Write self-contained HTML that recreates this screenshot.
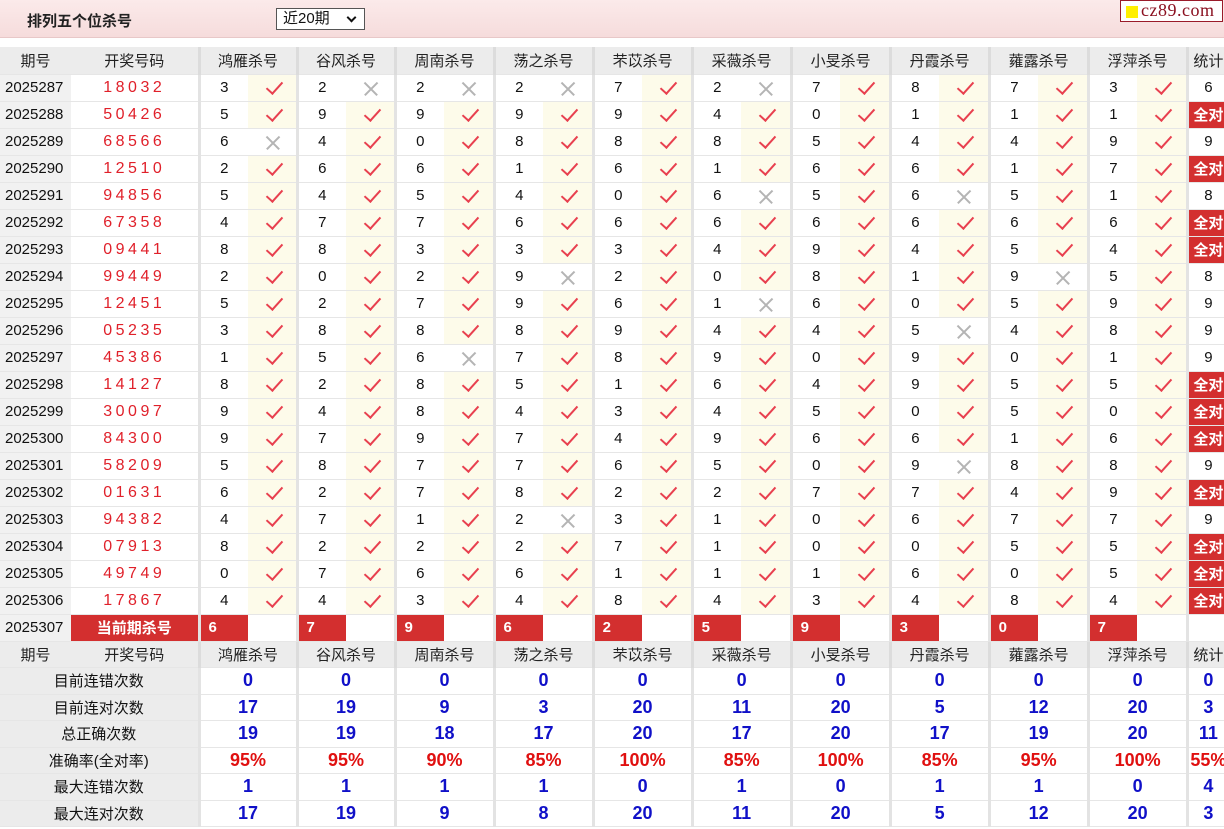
<!DOCTYPE html>
<html><head><meta charset="utf-8">
<style>
*{box-sizing:border-box;margin:0;padding:0}
body{width:1224px;height:829px;background:#fff;font-family:"Liberation Sans","Noto Sans CJK SC",sans-serif;overflow:hidden;position:relative}
.top{position:absolute;left:0;top:0;width:1224px;height:38px;background:linear-gradient(#fbeaea,#f6dcdc);border-bottom:1px solid #e8c8c8}
.title{position:absolute;left:27px;top:10px;font-size:15px;font-weight:bold;color:#222}
.sel{position:absolute;left:276px;top:8px;width:89px;height:22px;border:1px solid #555;background:#fff;font-size:15px;padding-left:6px;line-height:20px;color:#111}
.sel:after{content:"";position:absolute;right:9px;top:5px;width:5px;height:5px;border-right:2px solid #111;border-bottom:2px solid #111;transform:rotate(45deg)}
.logo{position:absolute;left:1120px;top:0;width:103px;height:22px;border:1px solid #9a1b2a;background:#fff;font-family:"Liberation Serif",serif;font-size:18px;color:#8b1020;line-height:19px;padding-left:20px;letter-spacing:.5px}
.logo:before{content:"";position:absolute;left:5px;top:5px;width:12px;height:12px;background:#ffef00}
table{position:absolute;left:0;top:47px;border-collapse:collapse;table-layout:fixed;width:1224px}
td{height:27px;border-bottom:1px solid #e6e6e6;text-align:center;font-size:15px;color:#111;white-space:nowrap;overflow:hidden;padding:0}
tr.s td{height:26.5px}
.h td{background:#ececec;font-size:15px;color:#222}
.p{background:#f1f1f1;text-align:left;padding-left:5px}
.d{color:#e0202a;letter-spacing:3.5px;font-size:16px;border-right:3px solid #e3e3e3}
.n{border-left:3px solid #e3e3e3;background:#fff}
.h .g{border-left:3px solid #dcdcdc}
.c{background:#fdfbea;position:relative}
.c:after{content:"";position:absolute;left:22px;top:3px;width:7px;height:14px;border-right:2px solid #e8404f;border-bottom:2px solid #e8404f;transform:rotate(42deg)}
.x{background:#fff;position:relative}
.x:before,.x:after{content:"";position:absolute;left:16px;top:13px;width:18px;height:1.5px;background:#b4b4b4;transform:rotate(45deg)}
.x:after{transform:rotate(-45deg)}
.t{border-left:3px solid #e3e3e3}
.a{background:#d32f2f;color:#fff;font-weight:bold}
.cur .d{background:#d32f2f;color:#fff;font-weight:bold;letter-spacing:0;font-size:15px}
.cur .n{background:#d32f2f;color:#fff;font-weight:bold;text-align:left;padding-left:8px}
.cur .e{background:#fff}
.l{background:#ececec;border-right:3px solid #e3e3e3}
.v{border-left:3px solid #e3e3e3;color:#1010c8;font-weight:bold;font-size:18px}
.r{color:#e01010}
</style></head><body>
<div class="top"><div class="title">排列五个位杀号</div><div class="sel">近20期</div><div class="logo">cz89.com</div></div>
<table>
<colgroup><col style="width:71px"><col style="width:128px"><col style="width:49px"><col style="width:49px"><col style="width:49px"><col style="width:49px"><col style="width:49px"><col style="width:50px"><col style="width:49px"><col style="width:50px"><col style="width:49px"><col style="width:50px"><col style="width:49px"><col style="width:50px"><col style="width:49px"><col style="width:50px"><col style="width:49px"><col style="width:50px"><col style="width:49px"><col style="width:50px"><col style="width:49px"><col style="width:50px"><col style="width:41px"></colgroup>
<tr class="h"><td class="p" style="text-align:center;padding:0">期号</td><td>开奖号码</td><td colspan="2" class="g">鸿雁杀号</td><td colspan="2" class="g">谷风杀号</td><td colspan="2" class="g">周南杀号</td><td colspan="2" class="g">荡之杀号</td><td colspan="2" class="g">芣苡杀号</td><td colspan="2" class="g">采薇杀号</td><td colspan="2" class="g">小旻杀号</td><td colspan="2" class="g">丹霞杀号</td><td colspan="2" class="g">蕹露杀号</td><td colspan="2" class="g">浮萍杀号</td><td class="g">统计</td></tr>
<tr><td class="p">2025287</td><td class="d">18032</td><td class="n">3</td><td class="c"></td><td class="n">2</td><td class="x"></td><td class="n">2</td><td class="x"></td><td class="n">2</td><td class="x"></td><td class="n">7</td><td class="c"></td><td class="n">2</td><td class="x"></td><td class="n">7</td><td class="c"></td><td class="n">8</td><td class="c"></td><td class="n">7</td><td class="c"></td><td class="n">3</td><td class="c"></td><td class="t">6</td></tr>
<tr><td class="p">2025288</td><td class="d">50426</td><td class="n">5</td><td class="c"></td><td class="n">9</td><td class="c"></td><td class="n">9</td><td class="c"></td><td class="n">9</td><td class="c"></td><td class="n">9</td><td class="c"></td><td class="n">4</td><td class="c"></td><td class="n">0</td><td class="c"></td><td class="n">1</td><td class="c"></td><td class="n">1</td><td class="c"></td><td class="n">1</td><td class="c"></td><td class="t a">全对</td></tr>
<tr><td class="p">2025289</td><td class="d">68566</td><td class="n">6</td><td class="x"></td><td class="n">4</td><td class="c"></td><td class="n">0</td><td class="c"></td><td class="n">8</td><td class="c"></td><td class="n">8</td><td class="c"></td><td class="n">8</td><td class="c"></td><td class="n">5</td><td class="c"></td><td class="n">4</td><td class="c"></td><td class="n">4</td><td class="c"></td><td class="n">9</td><td class="c"></td><td class="t">9</td></tr>
<tr><td class="p">2025290</td><td class="d">12510</td><td class="n">2</td><td class="c"></td><td class="n">6</td><td class="c"></td><td class="n">6</td><td class="c"></td><td class="n">1</td><td class="c"></td><td class="n">6</td><td class="c"></td><td class="n">1</td><td class="c"></td><td class="n">6</td><td class="c"></td><td class="n">6</td><td class="c"></td><td class="n">1</td><td class="c"></td><td class="n">7</td><td class="c"></td><td class="t a">全对</td></tr>
<tr><td class="p">2025291</td><td class="d">94856</td><td class="n">5</td><td class="c"></td><td class="n">4</td><td class="c"></td><td class="n">5</td><td class="c"></td><td class="n">4</td><td class="c"></td><td class="n">0</td><td class="c"></td><td class="n">6</td><td class="x"></td><td class="n">5</td><td class="c"></td><td class="n">6</td><td class="x"></td><td class="n">5</td><td class="c"></td><td class="n">1</td><td class="c"></td><td class="t">8</td></tr>
<tr><td class="p">2025292</td><td class="d">67358</td><td class="n">4</td><td class="c"></td><td class="n">7</td><td class="c"></td><td class="n">7</td><td class="c"></td><td class="n">6</td><td class="c"></td><td class="n">6</td><td class="c"></td><td class="n">6</td><td class="c"></td><td class="n">6</td><td class="c"></td><td class="n">6</td><td class="c"></td><td class="n">6</td><td class="c"></td><td class="n">6</td><td class="c"></td><td class="t a">全对</td></tr>
<tr><td class="p">2025293</td><td class="d">09441</td><td class="n">8</td><td class="c"></td><td class="n">8</td><td class="c"></td><td class="n">3</td><td class="c"></td><td class="n">3</td><td class="c"></td><td class="n">3</td><td class="c"></td><td class="n">4</td><td class="c"></td><td class="n">9</td><td class="c"></td><td class="n">4</td><td class="c"></td><td class="n">5</td><td class="c"></td><td class="n">4</td><td class="c"></td><td class="t a">全对</td></tr>
<tr><td class="p">2025294</td><td class="d">99449</td><td class="n">2</td><td class="c"></td><td class="n">0</td><td class="c"></td><td class="n">2</td><td class="c"></td><td class="n">9</td><td class="x"></td><td class="n">2</td><td class="c"></td><td class="n">0</td><td class="c"></td><td class="n">8</td><td class="c"></td><td class="n">1</td><td class="c"></td><td class="n">9</td><td class="x"></td><td class="n">5</td><td class="c"></td><td class="t">8</td></tr>
<tr><td class="p">2025295</td><td class="d">12451</td><td class="n">5</td><td class="c"></td><td class="n">2</td><td class="c"></td><td class="n">7</td><td class="c"></td><td class="n">9</td><td class="c"></td><td class="n">6</td><td class="c"></td><td class="n">1</td><td class="x"></td><td class="n">6</td><td class="c"></td><td class="n">0</td><td class="c"></td><td class="n">5</td><td class="c"></td><td class="n">9</td><td class="c"></td><td class="t">9</td></tr>
<tr><td class="p">2025296</td><td class="d">05235</td><td class="n">3</td><td class="c"></td><td class="n">8</td><td class="c"></td><td class="n">8</td><td class="c"></td><td class="n">8</td><td class="c"></td><td class="n">9</td><td class="c"></td><td class="n">4</td><td class="c"></td><td class="n">4</td><td class="c"></td><td class="n">5</td><td class="x"></td><td class="n">4</td><td class="c"></td><td class="n">8</td><td class="c"></td><td class="t">9</td></tr>
<tr><td class="p">2025297</td><td class="d">45386</td><td class="n">1</td><td class="c"></td><td class="n">5</td><td class="c"></td><td class="n">6</td><td class="x"></td><td class="n">7</td><td class="c"></td><td class="n">8</td><td class="c"></td><td class="n">9</td><td class="c"></td><td class="n">0</td><td class="c"></td><td class="n">9</td><td class="c"></td><td class="n">0</td><td class="c"></td><td class="n">1</td><td class="c"></td><td class="t">9</td></tr>
<tr><td class="p">2025298</td><td class="d">14127</td><td class="n">8</td><td class="c"></td><td class="n">2</td><td class="c"></td><td class="n">8</td><td class="c"></td><td class="n">5</td><td class="c"></td><td class="n">1</td><td class="c"></td><td class="n">6</td><td class="c"></td><td class="n">4</td><td class="c"></td><td class="n">9</td><td class="c"></td><td class="n">5</td><td class="c"></td><td class="n">5</td><td class="c"></td><td class="t a">全对</td></tr>
<tr><td class="p">2025299</td><td class="d">30097</td><td class="n">9</td><td class="c"></td><td class="n">4</td><td class="c"></td><td class="n">8</td><td class="c"></td><td class="n">4</td><td class="c"></td><td class="n">3</td><td class="c"></td><td class="n">4</td><td class="c"></td><td class="n">5</td><td class="c"></td><td class="n">0</td><td class="c"></td><td class="n">5</td><td class="c"></td><td class="n">0</td><td class="c"></td><td class="t a">全对</td></tr>
<tr><td class="p">2025300</td><td class="d">84300</td><td class="n">9</td><td class="c"></td><td class="n">7</td><td class="c"></td><td class="n">9</td><td class="c"></td><td class="n">7</td><td class="c"></td><td class="n">4</td><td class="c"></td><td class="n">9</td><td class="c"></td><td class="n">6</td><td class="c"></td><td class="n">6</td><td class="c"></td><td class="n">1</td><td class="c"></td><td class="n">6</td><td class="c"></td><td class="t a">全对</td></tr>
<tr><td class="p">2025301</td><td class="d">58209</td><td class="n">5</td><td class="c"></td><td class="n">8</td><td class="c"></td><td class="n">7</td><td class="c"></td><td class="n">7</td><td class="c"></td><td class="n">6</td><td class="c"></td><td class="n">5</td><td class="c"></td><td class="n">0</td><td class="c"></td><td class="n">9</td><td class="x"></td><td class="n">8</td><td class="c"></td><td class="n">8</td><td class="c"></td><td class="t">9</td></tr>
<tr><td class="p">2025302</td><td class="d">01631</td><td class="n">6</td><td class="c"></td><td class="n">2</td><td class="c"></td><td class="n">7</td><td class="c"></td><td class="n">8</td><td class="c"></td><td class="n">2</td><td class="c"></td><td class="n">2</td><td class="c"></td><td class="n">7</td><td class="c"></td><td class="n">7</td><td class="c"></td><td class="n">4</td><td class="c"></td><td class="n">9</td><td class="c"></td><td class="t a">全对</td></tr>
<tr><td class="p">2025303</td><td class="d">94382</td><td class="n">4</td><td class="c"></td><td class="n">7</td><td class="c"></td><td class="n">1</td><td class="c"></td><td class="n">2</td><td class="x"></td><td class="n">3</td><td class="c"></td><td class="n">1</td><td class="c"></td><td class="n">0</td><td class="c"></td><td class="n">6</td><td class="c"></td><td class="n">7</td><td class="c"></td><td class="n">7</td><td class="c"></td><td class="t">9</td></tr>
<tr><td class="p">2025304</td><td class="d">07913</td><td class="n">8</td><td class="c"></td><td class="n">2</td><td class="c"></td><td class="n">2</td><td class="c"></td><td class="n">2</td><td class="c"></td><td class="n">7</td><td class="c"></td><td class="n">1</td><td class="c"></td><td class="n">0</td><td class="c"></td><td class="n">0</td><td class="c"></td><td class="n">5</td><td class="c"></td><td class="n">5</td><td class="c"></td><td class="t a">全对</td></tr>
<tr><td class="p">2025305</td><td class="d">49749</td><td class="n">0</td><td class="c"></td><td class="n">7</td><td class="c"></td><td class="n">6</td><td class="c"></td><td class="n">6</td><td class="c"></td><td class="n">1</td><td class="c"></td><td class="n">1</td><td class="c"></td><td class="n">1</td><td class="c"></td><td class="n">6</td><td class="c"></td><td class="n">0</td><td class="c"></td><td class="n">5</td><td class="c"></td><td class="t a">全对</td></tr>
<tr><td class="p">2025306</td><td class="d">17867</td><td class="n">4</td><td class="c"></td><td class="n">4</td><td class="c"></td><td class="n">3</td><td class="c"></td><td class="n">4</td><td class="c"></td><td class="n">8</td><td class="c"></td><td class="n">4</td><td class="c"></td><td class="n">3</td><td class="c"></td><td class="n">4</td><td class="c"></td><td class="n">8</td><td class="c"></td><td class="n">4</td><td class="c"></td><td class="t a">全对</td></tr>
<tr class="cur"><td class="p">2025307</td><td class="d">当前期杀号</td><td class="n">6</td><td class="e"></td><td class="n">7</td><td class="e"></td><td class="n">9</td><td class="e"></td><td class="n">6</td><td class="e"></td><td class="n">2</td><td class="e"></td><td class="n">5</td><td class="e"></td><td class="n">9</td><td class="e"></td><td class="n">3</td><td class="e"></td><td class="n">0</td><td class="e"></td><td class="n">7</td><td class="e"></td><td class="t"></td></tr>
<tr class="h s"><td class="p" style="text-align:center;padding:0">期号</td><td>开奖号码</td><td colspan="2" class="g">鸿雁杀号</td><td colspan="2" class="g">谷风杀号</td><td colspan="2" class="g">周南杀号</td><td colspan="2" class="g">荡之杀号</td><td colspan="2" class="g">芣苡杀号</td><td colspan="2" class="g">采薇杀号</td><td colspan="2" class="g">小旻杀号</td><td colspan="2" class="g">丹霞杀号</td><td colspan="2" class="g">蕹露杀号</td><td colspan="2" class="g">浮萍杀号</td><td class="g">统计</td></tr>
<tr class="s"><td colspan="2" class="l">目前连错次数</td><td colspan="2" class="v">0</td><td colspan="2" class="v">0</td><td colspan="2" class="v">0</td><td colspan="2" class="v">0</td><td colspan="2" class="v">0</td><td colspan="2" class="v">0</td><td colspan="2" class="v">0</td><td colspan="2" class="v">0</td><td colspan="2" class="v">0</td><td colspan="2" class="v">0</td><td class="v">0</td></tr>
<tr class="s"><td colspan="2" class="l">目前连对次数</td><td colspan="2" class="v">17</td><td colspan="2" class="v">19</td><td colspan="2" class="v">9</td><td colspan="2" class="v">3</td><td colspan="2" class="v">20</td><td colspan="2" class="v">11</td><td colspan="2" class="v">20</td><td colspan="2" class="v">5</td><td colspan="2" class="v">12</td><td colspan="2" class="v">20</td><td class="v">3</td></tr>
<tr class="s"><td colspan="2" class="l">总正确次数</td><td colspan="2" class="v">19</td><td colspan="2" class="v">19</td><td colspan="2" class="v">18</td><td colspan="2" class="v">17</td><td colspan="2" class="v">20</td><td colspan="2" class="v">17</td><td colspan="2" class="v">20</td><td colspan="2" class="v">17</td><td colspan="2" class="v">19</td><td colspan="2" class="v">20</td><td class="v">11</td></tr>
<tr class="s"><td colspan="2" class="l">准确率(全对率)</td><td colspan="2" class="v r">95%</td><td colspan="2" class="v r">95%</td><td colspan="2" class="v r">90%</td><td colspan="2" class="v r">85%</td><td colspan="2" class="v r">100%</td><td colspan="2" class="v r">85%</td><td colspan="2" class="v r">100%</td><td colspan="2" class="v r">85%</td><td colspan="2" class="v r">95%</td><td colspan="2" class="v r">100%</td><td class="v r">55%</td></tr>
<tr class="s"><td colspan="2" class="l">最大连错次数</td><td colspan="2" class="v">1</td><td colspan="2" class="v">1</td><td colspan="2" class="v">1</td><td colspan="2" class="v">1</td><td colspan="2" class="v">0</td><td colspan="2" class="v">1</td><td colspan="2" class="v">0</td><td colspan="2" class="v">1</td><td colspan="2" class="v">1</td><td colspan="2" class="v">0</td><td class="v">4</td></tr>
<tr class="s"><td colspan="2" class="l">最大连对次数</td><td colspan="2" class="v">17</td><td colspan="2" class="v">19</td><td colspan="2" class="v">9</td><td colspan="2" class="v">8</td><td colspan="2" class="v">20</td><td colspan="2" class="v">11</td><td colspan="2" class="v">20</td><td colspan="2" class="v">5</td><td colspan="2" class="v">12</td><td colspan="2" class="v">20</td><td class="v">3</td></tr>
</table>
</body></html>
